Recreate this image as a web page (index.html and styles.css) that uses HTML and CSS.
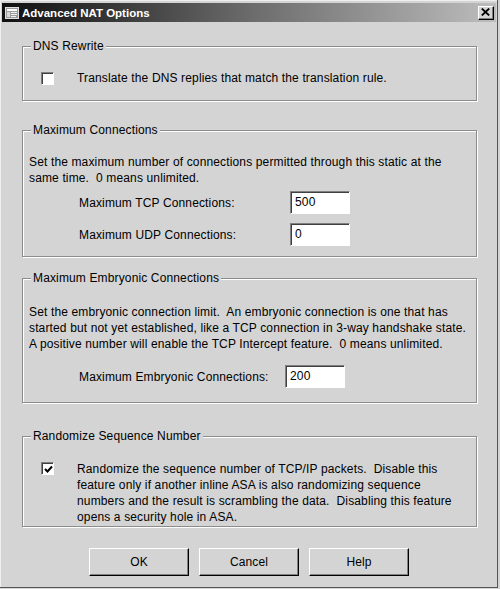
FILE: index.html
```html
<!DOCTYPE html>
<html>
<head>
<meta charset="utf-8">
<title>Advanced NAT Options</title>
<link rel="stylesheet" href="styles.css">
</head>
<body>
<div class="window">
  <div class="titlebar">
    <svg class="app-icon" width="14" height="14" viewBox="0 0 14 14">
      <rect x="0.5" y="1.5" width="13" height="11" fill="#9a9a9a" stroke="#e0e0e0"/>
      <rect x="2" y="3" width="10" height="2" fill="#ffffff"/>
      <rect x="2" y="6" width="3" height="5" fill="#d8d8d8"/>
      <rect x="6" y="6" width="6" height="1" fill="#f0f0f0"/>
      <rect x="6" y="8" width="6" height="1" fill="#f0f0f0"/>
      <rect x="6" y="10" width="5" height="1" fill="#f0f0f0"/>
    </svg>
    <span class="title">Advanced NAT Options</span>
    <span class="close">
      <svg width="9" height="8" viewBox="0 0 9 8"><path d="M0.8 0.6 L8.2 7.4 M8.2 0.6 L0.8 7.4" stroke="#000" stroke-width="1.9"/></svg>
    </span>
  </div>

  <div class="content">
    <fieldset class="group group-dns">
      <legend>DNS Rewrite</legend>
      <div class="check-row">
        <span class="checkbox"></span>
        <span class="check-label">Translate the DNS replies that match the translation rule.</span>
      </div>
    </fieldset>

    <fieldset class="group group-max">
      <legend>Maximum Connections</legend>
      <p class="desc">Set the maximum number of connections permitted through this static at the same time.&nbsp; 0 means unlimited.</p>
      <div class="field-row">
        <span class="field-label">Maximum TCP Connections:</span>
        <span class="input">500</span>
      </div>
      <div class="field-row second">
        <span class="field-label">Maximum UDP Connections:</span>
        <span class="input">0</span>
      </div>
    </fieldset>

    <fieldset class="group group-emb">
      <legend>Maximum Embryonic Connections</legend>
      <p class="desc">Set the embryonic connection limit.&nbsp; An embryonic connection is one that has started but not yet established, like a TCP connection in 3-way handshake state. A positive number will enable the TCP Intercept feature.&nbsp; 0 means unlimited.</p>
      <div class="field-row emb">
        <span class="field-label">Maximum Embryonic Connections:</span>
        <span class="input">200</span>
      </div>
    </fieldset>

    <fieldset class="group group-rand">
      <legend>Randomize Sequence Number</legend>
      <div class="check-row top">
        <span class="checkbox checked">
          <svg width="9" height="9" viewBox="0 0 9 9"><path d="M1 4 L3.5 6.5 L8 1.5" fill="none" stroke="#000" stroke-width="2"/></svg>
        </span>
        <span class="check-label wrap">Randomize the sequence number of TCP/IP packets.&nbsp; Disable this feature only if another inline ASA is also randomizing sequence numbers and the result is scrambling the data.&nbsp; Disabling this feature opens a security hole in ASA.</span>
      </div>
    </fieldset>

    <div class="buttons">
      <span class="btn">OK</span>
      <span class="btn">Cancel</span>
      <span class="btn">Help</span>
    </div>
  </div>
</div>
</body>
</html>
```

FILE: styles.css
```css
html, body {
  margin: 0;
  padding: 0;
  background: #d4d4d4;
}

.window {
  width: 498px;
  height: 588px;
  box-sizing: border-box;
  padding: 3px 1px 0 2px;
  background: #d4d4d4;
  border-right: 1px solid #555;
  border-bottom: 1px solid #555;
  box-shadow: inset 1px 1px 0 #efefef;
  font-family: "Liberation Sans", Arial, sans-serif;
  font-size: 12px;
  letter-spacing: 0.14px;
  color: #000;
}

.titlebar {
  height: 19px;
  display: flex;
  align-items: center;
  padding-left: 3px;
  letter-spacing: 0;
  background: linear-gradient(to right, #101010 0%, #242424 12%, #6b6b6b 50%, #bdbdbd 100%);
}

.app-icon {
  flex: none;
  display: block;
}

.title {
  margin-left: 3px;
  color: #fff;
  font-weight: bold;
  font-size: 11.5px;
  flex: 1;
}

.close {
  width: 16px;
  height: 14px;
  box-sizing: border-box;
  margin-right: 2px;
  background: #d4d4d4;
  border-top: 1px solid #fff;
  border-left: 1px solid #fff;
  border-right: 1px solid #000;
  border-bottom: 1px solid #000;
  box-shadow: inset -1px -1px 0 #808080;
  display: flex;
  align-items: center;
  justify-content: center;
}

.close svg {
  display: block;
  margin: 0 1px 1px 0;
}

.content {
  padding: 16px 0 0 20px;
}

.group {
  width: 455px;
  box-sizing: border-box;
  margin: 0;
  padding: 0 6px;
  min-width: 0;
  border: 1px solid #8c8c8c;
  box-shadow: 1px 1px 0 #fff, inset 1px 1px 0 #fff;
}

.group legend {
  margin-left: 2px;
  padding: 0 2px;
  height: 16px;
  line-height: 16px;
  background: #d4d4d4;
}

.group-dns {
  padding-top: 16px;
  padding-bottom: 14px;
}

.group-max {
  margin-top: 21px;
  padding-top: 16px;
  padding-bottom: 10px;
}

.group-emb {
  margin-top: 13px;
  padding-top: 18px;
  padding-bottom: 14px;
}

.group-rand {
  margin-top: 25px;
  padding-top: 17px;
  padding-bottom: 1px;
}

.check-row {
  display: flex;
  align-items: center;
  padding-left: 12px;
  line-height: 16px;
}

.check-row.top {
  align-items: flex-start;
}

.checkbox {
  flex: none;
  width: 13px;
  height: 13px;
  box-sizing: border-box;
  background: #fff;
  border-top: 1px solid #808080;
  border-left: 1px solid #808080;
  border-right: 1px solid #fff;
  border-bottom: 1px solid #fff;
  box-shadow: inset 1px 1px 0 #404040;
  display: flex;
  align-items: center;
  justify-content: center;
}

.check-row.top .checkbox {
  margin-top: 1px;
}

.checkbox svg {
  display: block;
  margin: 1px 0 0 1px;
}

.check-label {
  margin-left: 23px;
}

.check-label.wrap {
  display: block;
  height: 64px;
  width: 380px;
}

.desc {
  margin: 0;
  line-height: 16px;
}

.field-row {
  display: flex;
  align-items: center;
  padding-left: 50px;
  margin-top: 5px;
}

.field-row.second {
  margin-top: 9px;
}

.field-row.emb {
  margin-top: 13px;
}

.field-label {
  width: 211px;
  flex: none;
}

.field-row.emb .field-label {
  width: 206px;
}

.input {
  width: 60px;
  height: 23px;
  box-sizing: border-box;
  padding-left: 4px;
  line-height: 20px;
  background: #fff;
  border-top: 1px solid #808080;
  border-left: 1px solid #808080;
  border-right: 1px solid #fff;
  border-bottom: 1px solid #fff;
  box-shadow: inset 1px 1px 0 #404040;
}

.buttons {
  display: flex;
  gap: 10px;
  margin-top: 21px;
  padding-left: 67px;
}

.btn {
  width: 100px;
  height: 28px;
  box-sizing: border-box;
  display: flex;
  align-items: center;
  justify-content: center;
  background: #d4d4d4;
  border-top: 1px solid #fff;
  border-left: 1px solid #fff;
  border-right: 1px solid #000;
  border-bottom: 1px solid #000;
  box-shadow: inset -1px -1px 0 #808080;
}
```
